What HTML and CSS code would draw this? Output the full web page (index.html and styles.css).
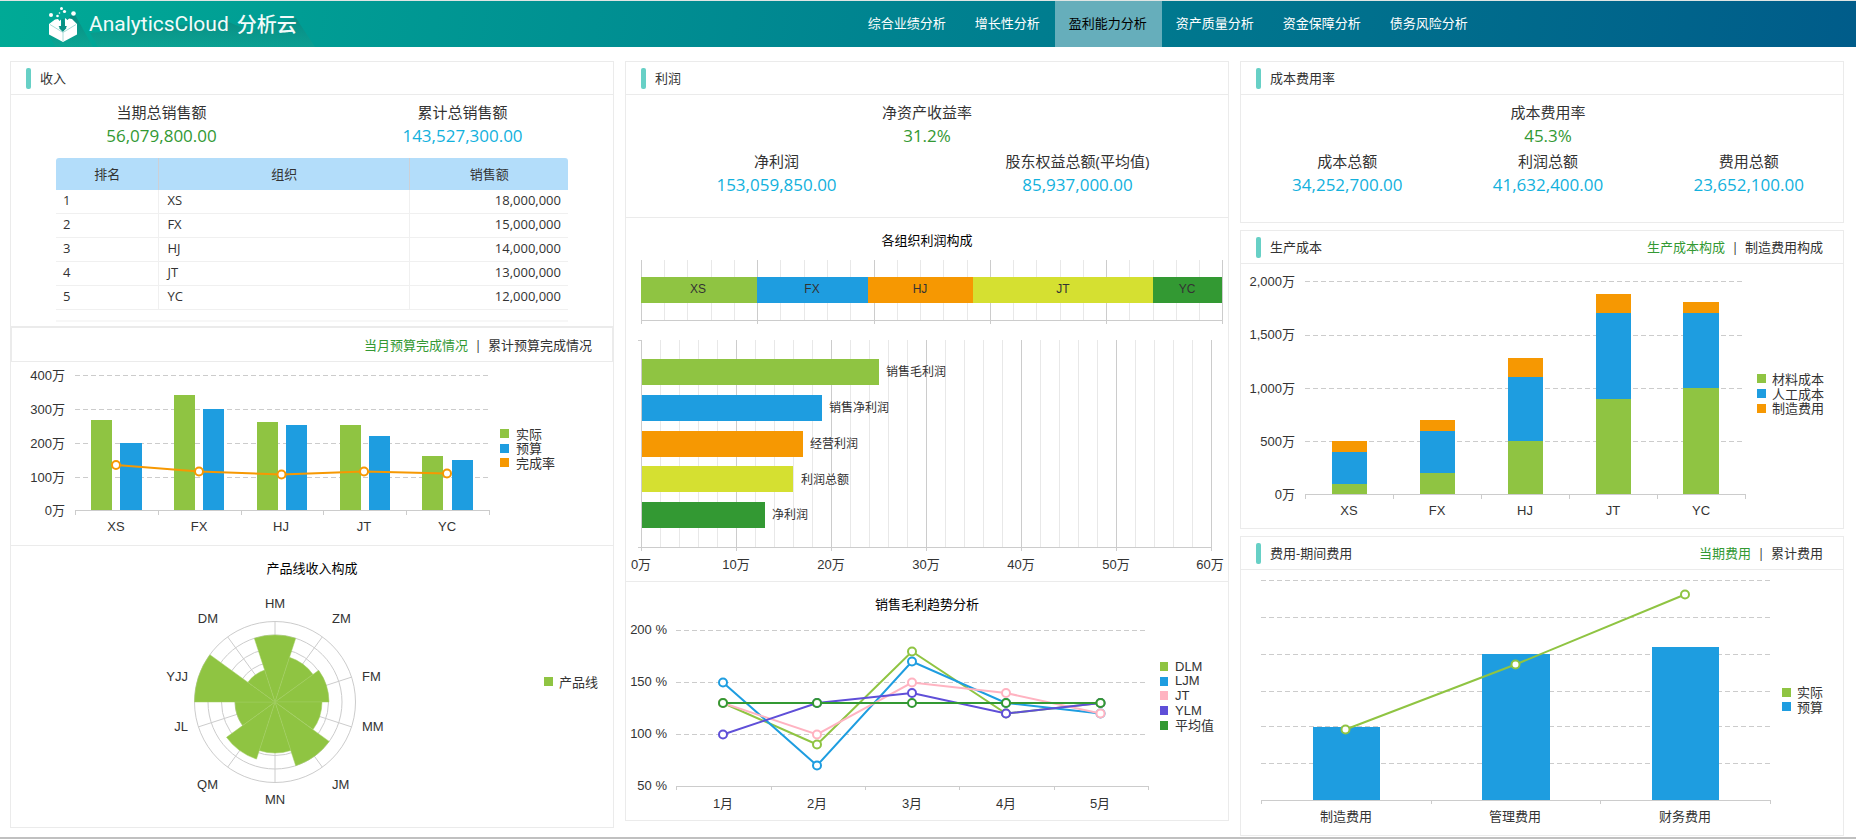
FILE: index.html
```html
<!DOCTYPE html>
<html lang="zh-CN">
<head>
<meta charset="utf-8">
<title>AnalyticsCloud 分析云</title>
<link rel="stylesheet" href="styles.css">
</head>
<body>
<header class="topbar">
  <div class="brand">
    <svg class="brand-shadow" width="270" height="46" viewBox="0 0 270 46" aria-hidden="true">
      <defs>
        <linearGradient id="shade" x1="0" y1="0" x2="0" y2="1">
          <stop offset="0" stop-color="#0b6e68" stop-opacity=".55"/>
          <stop offset="1" stop-color="#1fa08e" stop-opacity=".35"/>
        </linearGradient>
      </defs>
      <path fill="url(#shade)" d="M3 35 L28 12 L47 46 H10Z M44 32 L180 20 L197 27 L209 46 H52Z M198 32 L250 17 L269 46 H207Z"/>
    </svg>
    <svg class="brand-icon" width="30" height="36" viewBox="0 0 30 36" aria-hidden="true">
      <g fill="#fff">
        <path d="M1 18 L7 13.500 L10 13 L11.500 15 L13 13.500 L13 20 L11 22 L14.800 26 L18.500 22 L17 20 V12 L19.500 14 L21 12.500 L24 13 L29 18 V28.500 L15 36 L1 28.500Z"/>
        <circle cx="3" cy="9" r="2"/><circle cx="9.500" cy="10" r="1.300"/><circle cx="13.500" cy="2.500" r="1.500"/>
        <circle cx="16.500" cy="5.500" r="1.600"/><circle cx="25.500" cy="7.500" r="2.300"/><circle cx="11.500" cy="7" r=".8"/>
      </g>
      <path fill="none" stroke="#9fd8d2" stroke-width=".9" d="M2 18.500 L15 26.500 L28 18.500 M15 26.500 V35"/>
      <path fill="#0a8f83" d="M13.500 13 h2.500 v7 h3 l-4 5.500 l-4.500 -5.500 h3z"/>
    </svg>
    <span class="brand-name">AnalyticsCloud</span>
    <span class="brand-cn">分析云</span>
  </div>
  <nav class="nav">
    <a href="#overall">综合业绩分析</a>
    <a href="#growth">增长性分析</a>
    <a href="#profit" class="active" aria-current="page">盈利能力分析</a>
    <a href="#asset">资产质量分析</a>
    <a href="#fund">资金保障分析</a>
    <a href="#debt">债务风险分析</a>
  </nav>
</header>

<main class="board">
  <div class="column">
    <section class="panel">
      <header class="panel-head"><h2 class="panel-title">收入</h2></header>
      <div class="stats two">
        <div class="stat"><span>当期总销售额</span><strong class="good">56,079,800.00</strong></div>
        <div class="stat"><span>累计总销售额</span><strong>143,527,300.00</strong></div>
      </div>
      <div class="rank-wrap">
        <table class="rank">
          <thead><tr><th class="c-no">排名</th><th class="c-org">组织</th><th>销售额</th></tr></thead>
          <tbody>
            <tr><td>1</td><td>XS</td><td>18,000,000</td></tr>
            <tr><td>2</td><td>FX</td><td>15,000,000</td></tr>
            <tr><td>3</td><td>HJ</td><td>14,000,000</td></tr>
            <tr><td>4</td><td>JT</td><td>13,000,000</td></tr>
            <tr><td>5</td><td>YC</td><td>12,000,000</td></tr>
          </tbody>
        </table>
      </div>
      <div class="sub-head">
        <div class="tabs">
          <button type="button" class="tab on">当月预算完成情况</button><i>|</i><button type="button" class="tab">累计预算完成情况</button>
        </div>
      </div>
      <svg class="chart" height="183" viewBox="0 0 602 183" role="img" aria-label="当月预算完成情况">
        <path class="dash" d="M64 13.500H478M64 47.500H478M64 81.500H478M64 115.500H478"/>
        <path class="axis" d="M64 148.500H478M64.500 148v5M147.500 148v5M230.500 148v5M312.500 148v5M395.500 148v5M478.500 148v5"/>
        <g class="solid">
          <path class="green" d="M80 58h21v90H80zM163 33h21v115h-21zM246 60h21v88h-21zM329 63h21v85h-21zM411 94h21v54h-21z"/>
          <path class="blue" d="M109 81h22v67h-22zM192 47h21v101h-21zM275 63h21v85h-21zM358 74h21v74h-21zM441 98h21v50h-21z"/>
        </g>
        <g class="line s-orange"><polyline points="105,103 188,109.500 270.500,112.500 353,109.500 436,111.500"/>
          <circle cx="105" cy="103" r="4"/><circle cx="188" cy="109.500" r="4"/><circle cx="270.500" cy="112.500" r="4"/><circle cx="353" cy="109.500" r="4"/><circle cx="436" cy="111.500" r="4"/></g>
        <g class="end"><text x="54" y="18">400万</text><text x="54" y="52">300万</text><text x="54" y="86">200万</text><text x="54" y="120">100万</text><text x="54" y="153">0万</text></g>
        <g class="mid"><text x="105" y="169">XS</text><text x="188" y="169">FX</text><text x="270" y="169">HJ</text><text x="353" y="169">JT</text><text x="436" y="169">YC</text></g>
        <rect class="green" x="489" y="67" width="9" height="9"/><text x="505" y="77">实际</text>
        <rect class="blue" x="489" y="82" width="9" height="9"/><text x="505" y="91">预算</text>
        <rect class="orange" x="489" y="96" width="9" height="9"/><text x="505" y="106">完成率</text>
      </svg>
      <div class="divide">
        <h3 class="chart-title">产品线收入构成</h3>
        <svg class="chart" height="246" viewBox="0 0 602 246" role="img" aria-label="产品线收入构成">
          <g transform="translate(264 121)">
            <g class="ring"><circle r="80.500"/><circle r="67"/><circle r="53.500"/><circle r="40"/><circle r="27"/><circle r="13.500"/>
              <path d="M0 -80.500V80.500M47.300 -65.100L-47.300 65.100M76.600 -24.900L-76.600 24.900M76.600 24.900L-76.600 -24.900M47.300 65.100L-47.300 -65.100"/></g>
            <g class="petal">
              <path d="M0 0L-20.700 -63.700A67 67 0 0 1 20.700 -63.700Z"/>
              <path d="M0 0L14.500 -44.700A47 47 0 0 1 38 -27.600Z"/>
              <path d="M0 0L43.700 -31.700A54 54 0 0 1 54 0Z"/>
              <path d="M0 0L47 0A47 47 0 0 1 38 27.600Z"/>
              <path d="M0 0L54.200 39.400A67 67 0 0 1 20.700 63.700Z"/>
              <path d="M0 0L15.800 48.500A51 51 0 0 1 -15.800 48.500Z"/>
              <path d="M0 0L-18.500 57.100A60 60 0 0 1 -48.500 35.300Z"/>
              <path d="M0 0L-32.400 23.500A40 40 0 0 1 -40 0Z"/>
              <path d="M0 0L-80.500 0A80.500 80.500 0 0 1 -65.100 -47.300Z"/>
              <path d="M0 0L-27.100 -19.700A33.500 33.500 0 0 1 -10.400 -31.900Z"/>
            </g>
            <g class="mid"><text x="0" y="-94">HM</text><text x="0" y="102">MN</text></g>
            <text x="57" y="-79">ZM</text><text x="87" y="-21">FM</text><text x="87" y="29">MM</text><text x="57" y="87">JM</text>
            <g class="end"><text x="-57" y="-79">DM</text><text x="-87" y="-21">YJJ</text><text x="-87" y="29">JL</text><text x="-57" y="87">QM</text></g>
          </g>
          <rect class="green" x="533" y="96" width="9" height="9"/><text x="548" y="106">产品线</text>
        </svg>
      </div>
    </section>
  </div>

  <div class="column">
    <section class="panel">
      <header class="panel-head"><h2 class="panel-title">利润</h2></header>
      <div class="stats two tall">
        <div class="stat wide"><span>净资产收益率</span><strong class="good">31.2%</strong></div>
        <div class="stat"><span>净利润</span><strong>153,059,850.00</strong></div>
        <div class="stat"><span>股东权益总额(平均值)</span><strong>85,937,000.00</strong></div>
      </div>
      <div class="divide">
        <h3 class="chart-title">各组织利润构成</h3>
        <svg class="chart" height="76" viewBox="0 0 602 76" role="img" aria-label="各组织利润构成">
          <path class="minor" d="M38.500 7V67M61.500 7V67M85.500 7V67M108.500 7V67M154.500 7V67M178.500 7V67M201.500 7V67M224.500 7V67M271.500 7V67M294.500 7V67M317.500 7V67M341.500 7V67M387.500 7V67M410.500 7V67M434.500 7V67M457.500 7V67M503.500 7V67M527.500 7V67M550.500 7V67M573.500 7V67"/>
          <path class="axis" d="M15.500 7V71M131.500 7V71M248.500 7V71M364.500 7V71M480.500 7V71M596.500 7V71M15 67.500H596"/>
          <g class="solid"><rect class="green" x="15" y="24" width="116" height="26"/><rect class="blue" x="131" y="24" width="111" height="26"/><rect class="orange" x="242" y="24" width="105" height="26"/><rect class="lime" x="347" y="24" width="180" height="26"/><rect class="forest" x="527" y="24" width="69" height="26"/></g>
          <g class="mid small"><text x="72" y="40">XS</text><text x="186" y="40">FX</text><text x="294" y="40">HJ</text><text x="437" y="40">JT</text><text x="561" y="40">YC</text></g>
        </svg>
        <svg class="chart" height="252" viewBox="0 0 602 252" role="img" aria-label="利润对比">
          <path class="minor" d="M34.500 11V218M53.500 11V218M72.500 11V218M91.500 11V218M129.500 11V218M148.500 11V218M167.500 11V218M186.500 11V218M224.500 11V218M243.500 11V218M262.500 11V218M281.500 11V218M319.500 11V218M338.500 11V218M357.500 11V218M376.500 11V218M414.500 11V218M433.500 11V218M452.500 11V218M471.500 11V218M509.500 11V218M528.500 11V218M547.500 11V218M566.500 11V218"/>
          <path class="axis" d="M110.500 11V222M205.500 11V222M300.500 11V222M395.500 11V222M490.500 11V222M585.500 11V222M12 218.500H585M12 11.500H16M15.500 11V222"/>
          <g class="solid"><rect class="green" x="16" y="30" width="237" height="26"/><rect class="blue" x="16" y="66" width="180" height="26"/><rect class="orange" x="16" y="102" width="161" height="26"/><rect class="lime" x="16" y="137" width="151" height="26"/><rect class="forest" x="16" y="173" width="123" height="26"/></g>
          <g class="small"><text x="260" y="47">销售毛利润</text><text x="203" y="83">销售净利润</text><text x="184" y="119">经营利润</text><text x="175" y="155">利润总额</text><text x="146" y="190">净利润</text></g>
          <g class="mid"><text x="15" y="240">0万</text><text x="110" y="240">10万</text><text x="205" y="240">20万</text><text x="300" y="240">30万</text><text x="395" y="240">40万</text><text x="490" y="240">50万</text><text x="584" y="240">60万</text></g>
        </svg>
      </div>
      <div class="divide">
        <h3 class="chart-title">销售毛利趋势分析</h3>
        <svg class="chart" height="203" viewBox="0 0 602 203" role="img" aria-label="销售毛利趋势分析">
          <path class="dash" d="M50 13.500H522M50 65.500H522M50 117.500H522"/>
          <path class="axis" d="M50 169.500H522M50.500 169v4M145.500 169v4M239.500 169v4M333.500 169v4M428.500 169v4M522.500 169v4"/>
          <g class="line s-green"><polyline points="97,86 191,127.500 286,34.500 380,96.500 474.500,86"/><circle cx="97" cy="86" r="4"/><circle cx="191" cy="127.500" r="4"/><circle cx="286" cy="34.500" r="4"/><circle cx="380" cy="96.500" r="4"/><circle cx="474.500" cy="86" r="4"/></g>
          <g class="line s-blue"><polyline points="97,65.500 191,148.500 286,44.500 380,86 474.500,96.500"/><circle cx="97" cy="65.500" r="4"/><circle cx="191" cy="148.500" r="4"/><circle cx="286" cy="44.500" r="4"/><circle cx="380" cy="86" r="4"/><circle cx="474.500" cy="96.500" r="4"/></g>
          <g class="line s-pink"><polyline points="97,86 191,117.500 286,65.500 380,76 474.500,96.500"/><circle cx="97" cy="86" r="4"/><circle cx="191" cy="117.500" r="4"/><circle cx="286" cy="65.500" r="4"/><circle cx="380" cy="76" r="4"/><circle cx="474.500" cy="96.500" r="4"/></g>
          <g class="line s-purple"><polyline points="97,117.500 191,86 286,76 380,96.500 474.500,86"/><circle cx="97" cy="117.500" r="4"/><circle cx="191" cy="86" r="4"/><circle cx="286" cy="76" r="4"/><circle cx="380" cy="96.500" r="4"/><circle cx="474.500" cy="86" r="4"/></g>
          <g class="line s-forest"><polyline points="97,86 474.500,86"/><circle cx="97" cy="86" r="4"/><circle cx="191" cy="86" r="4"/><circle cx="286" cy="86" r="4"/><circle cx="380" cy="86" r="4"/><circle cx="474.500" cy="86" r="4"/></g>
          <g class="end"><text x="41" y="17">200 %</text><text x="41" y="69">150 %</text><text x="41" y="121">100 %</text><text x="41" y="173">50 %</text></g>
          <g class="mid"><text x="97" y="191">1月</text><text x="191" y="191">2月</text><text x="286" y="191">3月</text><text x="380" y="191">4月</text><text x="474" y="191">5月</text></g>
          <rect class="green" x="534" y="45" width="8" height="9"/><text x="549" y="54">DLM</text>
          <rect class="blue" x="534" y="60" width="8" height="9"/><text x="549" y="68">LJM</text>
          <rect class="pink" x="534" y="74" width="8" height="9"/><text x="549" y="83">JT</text>
          <rect class="purple" x="534" y="89" width="8" height="9"/><text x="549" y="98">YLM</text>
          <rect class="forest" x="534" y="104" width="8" height="9"/><text x="549" y="113">平均值</text>
        </svg>
      </div>
    </section>
  </div>

  <div class="column">
    <section class="panel">
      <header class="panel-head"><h2 class="panel-title">成本费用率</h2></header>
      <div class="stats three">
        <div class="stat wide"><span>成本费用率</span><strong class="good">45.3%</strong></div>
        <div class="stat"><span>成本总额</span><strong>34,252,700.00</strong></div>
        <div class="stat"><span>利润总额</span><strong>41,632,400.00</strong></div>
        <div class="stat"><span>费用总额</span><strong>23,652,100.00</strong></div>
      </div>
    </section>
    <section class="panel">
      <header class="panel-head"><h2 class="panel-title">生产成本</h2>
        <div class="tabs"><button type="button" class="tab on">生产成本构成</button><i>|</i><button type="button" class="tab">制造费用构成</button></div>
      </header>
      <svg class="chart" height="264" viewBox="0 0 602 264" role="img" aria-label="生产成本构成">
        <path class="dash" d="M64 17.500H502M64 71.500H502M64 124.500H502M64 177.500H502"/>
        <path class="axis" d="M64 230.500H504M64.500 230v5M152.500 230v5M240.500 230v5M328.500 230v5M416.500 230v5M504.500 230v5"/>
        <g class="solid">
          <path class="orange" d="M91 177h35v11H91zM179 156h35v11h-35zM267 94h35v19h-35zM355 30h35v19h-35zM442 38h36v11h-36z"/>
          <path class="blue" d="M91 188h35v32H91zM179 167h35v42h-35zM267 113h35v64h-35zM355 49h35v86h-35zM442 49h36v75h-36z"/>
          <path class="green" d="M91 220h35v10H91zM179 209h35v21h-35zM267 177h35v53h-35zM355 135h35v95h-35zM442 124h36v106h-36z"/>
        </g>
        <g class="end"><text x="54" y="22">2,000万</text><text x="54" y="75">1,500万</text><text x="54" y="129">1,000万</text><text x="54" y="182">500万</text><text x="54" y="235">0万</text></g>
        <g class="mid"><text x="108" y="251">XS</text><text x="196" y="251">FX</text><text x="284" y="251">HJ</text><text x="372" y="251">JT</text><text x="460" y="251">YC</text></g>
        <rect class="green" x="516" y="110" width="9" height="9"/><text x="531" y="120">材料成本</text>
        <rect class="blue" x="516" y="125" width="9" height="9"/><text x="531" y="135">人工成本</text>
        <rect class="orange" x="516" y="140" width="9" height="9"/><text x="531" y="149">制造费用</text>
      </svg>
    </section>
    <section class="panel">
      <header class="panel-head"><h2 class="panel-title">费用-期间费用</h2>
        <div class="tabs"><button type="button" class="tab on">当期费用</button><i>|</i><button type="button" class="tab">累计费用</button></div>
      </header>
      <svg class="chart" height="265" viewBox="0 0 602 265" role="img" aria-label="当期费用">
        <path class="dash" d="M20 10.500H529M20 47.500H529M20 84.500H529M20 121.500H529M20 156.500H529M20 193.500H529"/>
        <path class="axis" d="M20 230.500H529M20.500 230v4M190.500 230v4M359.500 230v4M529.500 230v4"/>
        <path class="blue solid" d="M72 157h67v73H72zM241 84h68v146h-68zM411 77h67v153h-67z"/>
        <g class="line s-green"><polyline points="104.500,159.500 274.500,94.500 444,24.500"/><circle cx="104.500" cy="159.500" r="4"/><circle cx="274.500" cy="94.500" r="4"/><circle cx="444" cy="24.500" r="4"/></g>
        <g class="mid"><text x="105" y="251">制造费用</text><text x="274" y="251">管理费用</text><text x="444" y="251">财务费用</text></g>
        <rect class="green" x="541" y="118" width="9" height="9"/><text x="556" y="127">实际</text>
        <rect class="blue" x="541" y="132" width="9" height="9"/><text x="556" y="142">预算</text>
      </svg>
    </section>
  </div>
</main>
</body>
</html>
```
FILE: styles.css
```css
* { box-sizing: border-box; }

body {
  margin: 0;
  border-top: 1px solid #dfe5e4;
  border-bottom: 2px solid #c0c0c0;
  background: #fff;
  color: #333;
  font: 13px/20px "Open Sans", "Noto Sans CJK SC", sans-serif;
}

h2, h3 { margin: 0; font-size: 13px; font-weight: 400; }

/* top bar */
.topbar {
  display: grid;
  grid-template-columns: 46% 1fr;
  height: 46px;
  background: linear-gradient(100deg, #00aa96 0%, #008490 47%, #005c8a 100%);
}

.brand {
  position: relative;
  display: flex;
  align-items: center;
  padding-left: 48px;
  color: #f2fbfa;
}

.brand-shadow { position: absolute; left: 46px; top: 0; }
.brand-icon { position: relative; margin-right: 11px; }
.brand-name { position: relative; font: 400 21px/24px Roboto, sans-serif; margin-right: 8px; }
.brand-cn { position: relative; font: 500 20px/24px "Noto Sans CJK SC", sans-serif; }

.nav { display: flex; }

.nav a {
  padding: 0 15px 0 14px;
  color: #fff;
  line-height: 44px;
  text-decoration: none;
}

.nav a.active { background: #66aebb; color: #000; }

/* board */
.board {
  display: grid;
  grid-template-columns: repeat(3, 1fr);
  gap: 11px;
  align-items: start;
  padding: 14px 12px 1px 10px;
}

.column { display: flex; flex-direction: column; gap: 7px; }

.panel { border: 1px solid #ebebeb; }

.panel-head {
  display: flex;
  align-items: center;
  justify-content: space-between;
  height: 33px;
  padding: 0 20px 0 15px;
  border-bottom: 1px solid #ebebeb;
}

.panel-title { display: flex; align-items: center; gap: 9px; }
.panel-title::before { content: ""; width: 5px; height: 21px; border-radius: 2px; background: #67d0c6; }

.sub-head {
  display: flex;
  align-items: center;
  justify-content: flex-end;
  height: 36px;
  padding: 0 20px;
  border: solid #ebebeb;
  border-width: 2px 1px 1px;
}

.tabs { display: flex; align-items: center; }
.tabs i { width: 20px; text-align: center; font-style: normal; }

.tab {
  padding: 0;
  border: 0;
  background: none;
  color: #333;
  font: inherit;
  cursor: pointer;
}

.tab.on { color: #339933; }

.stats {
  display: grid;
  row-gap: 1px;
  padding-top: 6px;
  text-align: center;
}

.stats.two { grid-template-columns: repeat(2, 1fr); }
.stats.tall { padding-bottom: 19px; }
.stats.three { grid-template-columns: repeat(3, 1fr); margin: 0 -6px 0 6px; padding-bottom: 24px; }
.stat span, .stat strong { display: block; }
.stat span { font-size: 15px; line-height: 22px; }
.stat strong { color: #12b1dd; font-size: 17px; font-weight: 400; line-height: 26px; }
.stat strong.good { color: #339933; }
.stat.wide { grid-column: 1 / -1; }

.rank-wrap {
  margin: 9px 45px 4px;
  padding-bottom: 10px;
  border-bottom: 2px solid #f7f7f7;
}

.rank { width: 100%; border-collapse: separate; border-spacing: 0; table-layout: fixed; }
.rank th { height: 32px; padding: 0 0 1px; background: #b3ddfa; font-weight: 400; }
.rank th + th { border-left: 1px solid #cdd0d6; }
.rank th:first-child { border-top-left-radius: 3px; }
.rank th:last-child { border-top-right-radius: 3px; }
.rank .c-no { width: 20%; }
.rank .c-org { width: 49%; }
.rank td { height: 24px; padding: 0 7px 3px; border-bottom: 1px solid #f0f0f0; }
.rank td + td { padding-left: 8px; border-left: 1px solid #f0f0f0; }
.rank td:last-child { text-align: right; }

.divide { border-top: 1px solid #ebebeb; }
.chart-title { padding: 10px 0 1px; color: #000; line-height: 24px; text-align: center; }

/* charts */
.chart {
  display: block;
  width: 100%;
  fill: #333;
  font: 13px "Liberation Sans", "Noto Sans CJK SC", sans-serif;
}

.small { font-size: 12px; }
.mid { text-anchor: middle; }
.end { text-anchor: end; }
.solid { shape-rendering: crispEdges; }
.dash, .axis, .minor, .ring { fill: none; stroke: #ccc; }
.dash { stroke-dasharray: 5 3; }
.minor { stroke: #e8e8e8; }
.green { fill: #8fc442; }
.blue { fill: #1e9de0; }
.orange { fill: #f69802; }
.lime { fill: #d5e031; }
.forest { fill: #339933; }
.pink { fill: #ffb3c1; }
.purple { fill: #5f4fd8; }
.petal { fill: #8fc442; stroke: #a3cf62; stroke-width: .5; }
.line { fill: #fff; stroke-width: 2; }
.line polyline { fill: none; }
.s-green { stroke: #8fc442; }
.s-blue { stroke: #1e9de0; }
.s-orange { stroke: #f69802; }
.s-pink { stroke: #ffb3c1; }
.s-purple { stroke: #5f4fd8; }
.s-forest { stroke: #339933; }
```
